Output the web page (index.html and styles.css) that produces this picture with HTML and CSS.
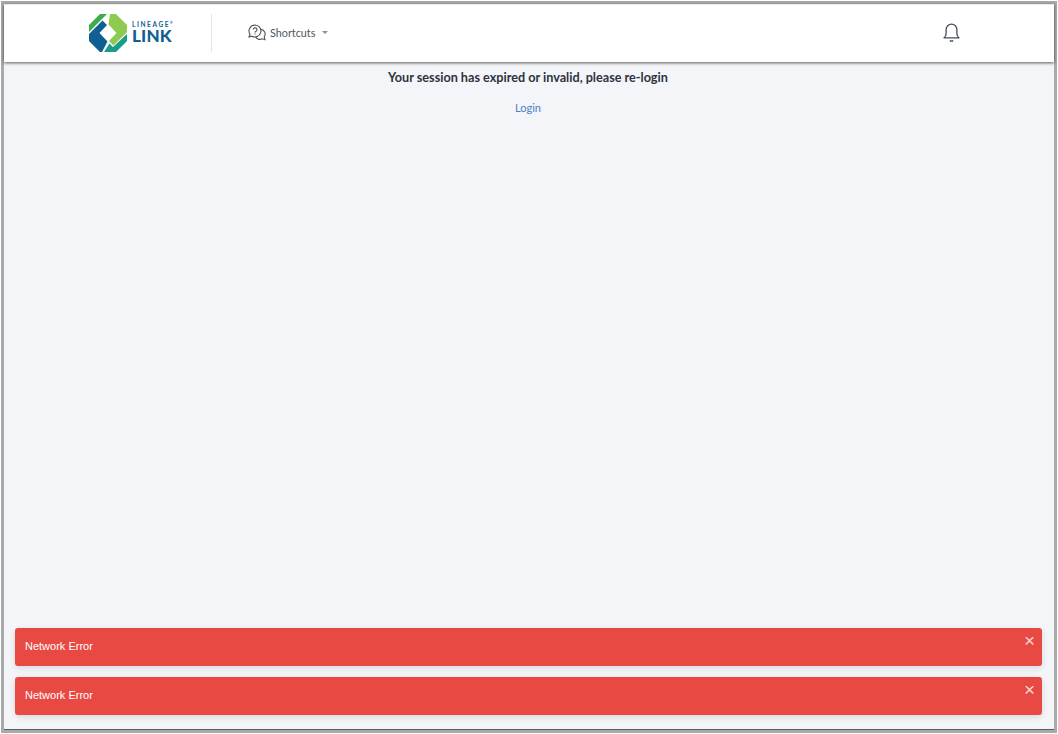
FILE: index.html
```html
<!DOCTYPE html>
<html lang="en">
<head>
    <meta charset="UTF-8">
    <meta name="viewport" content="width=device-width, initial-scale=1.0">
    <title>Lineage Link</title>
    <link rel="stylesheet" href="styles.css">
</head>
<body>
    <div class="frame">
        <header class="topbar">
            <div class="brand">
                <svg class="brand-mark" width="38" height="38" viewBox="0 0 38 38">
                    <!-- four interlocking bands around a diamond hole -->
                    <polygon fill="#3fab4f" points="0,11 11,0 18,0 0,18"/>
                    <polygon fill="#0f5f92" points="13.500,6.500 18,11 10.500,19 18.500,27.500 13,38 11,38 0,27 0,20"/>
                    <polygon fill="#1a9c86" points="38,20 38,27 27,38 15,38 20.500,29.500 24,33"/>
                    <polygon fill="#8ccb4f" points="21,0 27,0 38,11 38,18 24.500,31.500 20,27 27.500,19 19.500,10.500"/>
                </svg>
                <div class="brand-text">
                    <span class="brand-top">LINEAGE<sup>®</sup></span>
                    <span class="brand-name">LINK</span>
                </div>
            </div>
            <div class="shortcuts">
                <svg class="shortcuts-icon" width="18" height="18" viewBox="0 0 18 18" fill="none" stroke="#4d535b" stroke-width="1.1">
                    <path d="M7 1a6 6 0 0 0-5 9.3L1 13l2.9-.8A6 6 0 1 0 7 1z"/>
                    <path d="M12.6 5.4a4.6 4.6 0 0 1 3.6 7.4l.8 2.9-3-.9a4.6 4.6 0 0 1-6.4-2"/>
                    <path d="M5.3 5.6a1.8 1.8 0 1 1 2.7 1.6c-.6.3-1 .7-1 1.3"/>
                    <path d="M7 9.6v1"/>
                </svg>
                <span>Shortcuts</span>
                <span class="caret"></span>
            </div>
            <svg class="bell" width="17" height="19" viewBox="0 0 17 19" fill="none" stroke="#454d5a" stroke-width="1.3">
                <path d="M1 14.8c1.500-.9 2.100-2.200 2.100-4.300V6.600a5.400 5.400 0 0 1 10.800 0v3.900c0 2.100.6 3.400 2.100 4.300z" stroke-linejoin="round"/>
                <path d="M6.800 17.600c1 .6 2.400.6 3.400 0"/>
            </svg>
        </header>
        <main class="content">
            <h4>Your session has expired or invalid, please re-login</h4>
            <a href="#" class="login-link">Login</a>
        </main>
        <div class="toasts">
            <div class="toast">Network Error<span class="toast-close">×</span></div>
            <div class="toast">Network Error<span class="toast-close">×</span></div>
        </div>
    </div>
</body>
</html>
```

FILE: styles.css
```css
html, body {
    margin: 0;
    padding: 0;
    background-color: #ffffff;
}
body {
    font-family: 'Lato', sans-serif;
    color: #2d3340;
    height: 734px;
    overflow: hidden;
}
.frame {
    position: relative;
    box-sizing: border-box;
    width: 1056px;
    height: 732px;
    margin: 1px 0 0 1px;
    border: 3px solid #a9abaa;
    background-color: #f4f5f8;
    box-shadow: inset 0 -1px 0 #5b5d5e;
    display: flex;
    flex-direction: column;
}
.topbar {
    flex: none;
    box-sizing: border-box;
    height: 58px;
    background-color: #ffffff;
    border-top: 1px solid #ececec;
    box-shadow: 0 1px 3px rgba(0,0,0,0.65);
    display: flex;
    align-items: center;
    padding-left: 85px;
    padding-right: 94px;
    padding-bottom: 2px;
}
.brand {
    display: flex;
    align-items: center;
    gap: 5px;
    height: 38px;
    width: 122px;
    border-right: 1px solid #e3e4e6;
}
.brand-mark {
    flex: none;
}
.brand-text {
    display: flex;
    flex-direction: column;
    gap: 1px;
    color: #0f5f8f;
    line-height: 1;
}
.brand-top {
    font-size: 6.5px;
    font-weight: 700;
    letter-spacing: 1.6px;
    height: 6px;
    line-height: 6px;
    white-space: nowrap;
}
.brand-top sup {
    font-size: 3px;
    line-height: 3px;
    letter-spacing: 0;
    vertical-align: top;
}
.brand-name {
    font-size: 17px;
    font-weight: 900;
    letter-spacing: 0.2px;
    height: 14px;
    line-height: 14px;
}
.shortcuts {
    display: flex;
    align-items: center;
    margin-left: 36px;
    font-size: 10.8px;
    color: #50565f;
}
.shortcuts-icon {
    margin-right: 4px;
}
.caret {
    width: 0;
    height: 0;
    margin-left: 7px;
    border-left: 3px solid transparent;
    border-right: 3px solid transparent;
    border-top: 3px solid #8a8f96;
}
.bell {
    margin-left: auto;
}
.content {
    text-align: center;
    padding-top: 7px;
    padding-right: 2px;
}
.content h4 {
    margin: 0;
    font-size: 12.65px;
    line-height: 18px;
    font-weight: 700;
}
.login-link {
    display: block;
    margin-top: 13px;
    font-size: 11px;
    line-height: 16px;
    color: #4a80c8;
    text-decoration: none;
}
.toasts {
    position: absolute;
    left: 11px;
    right: 12px;
    bottom: 15px;
    display: flex;
    flex-direction: column;
    gap: 11px;
}
.toast {
    position: relative;
    height: 38px;
    box-sizing: border-box;
    padding-left: 10px;
    border-radius: 3px;
    background-color: #e84a43;
    box-shadow: 0 2px 6px rgba(0,0,0,0.12);
    color: #ffffff;
    font-family: 'Liberation Sans', sans-serif;
    font-size: 11px;
    line-height: 36px;
}
.toast-close {
    position: absolute;
    top: 5px;
    right: 7px;
    font-size: 19px;
    line-height: 15px;
    color: #fbd5d3;
}
```
